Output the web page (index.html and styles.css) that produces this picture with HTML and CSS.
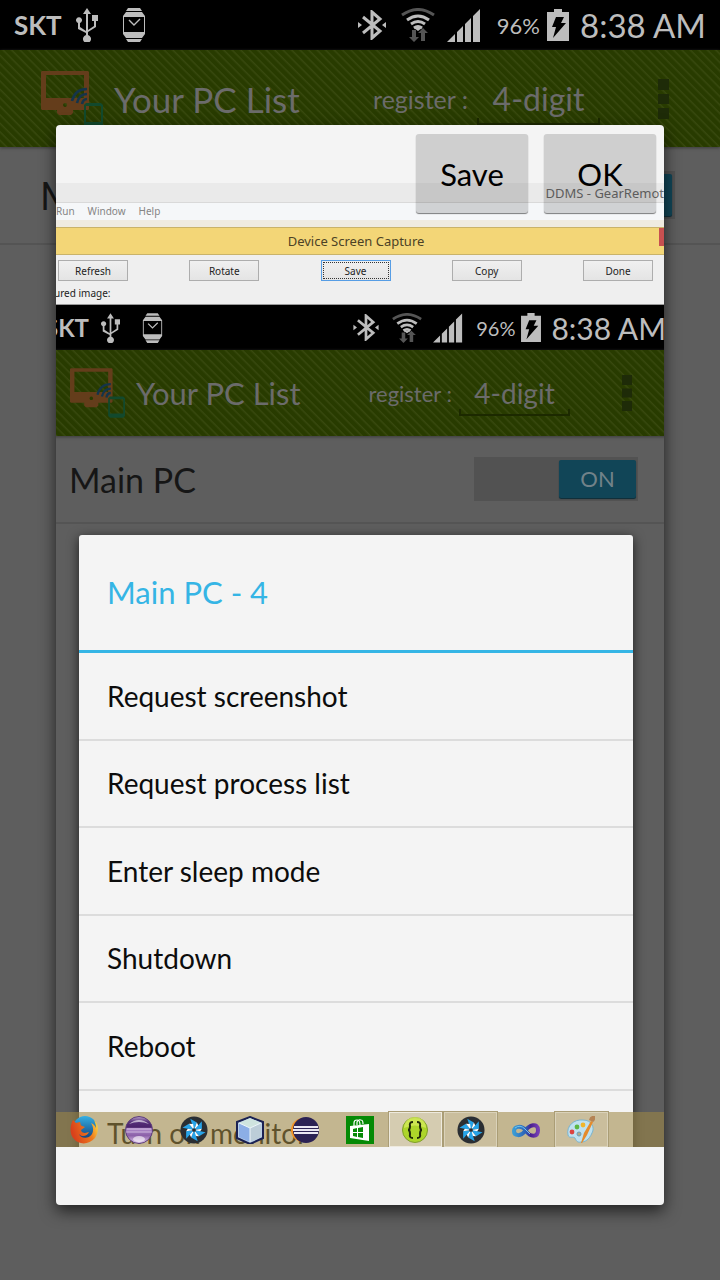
FILE: index.html
```html
<!DOCTYPE html>
<html lang="en">

<head>
    <meta charset="utf-8">
    <meta name="viewport" content="width=device-width, initial-scale=1.0">
    <title>Your PC List</title>
    <link rel="stylesheet" href="styles.css">
</head>

<body>
    <!-- Shared icons -->
    <svg class="sprite" aria-hidden="true">
        <symbol id="usb" viewBox="0 0 22 34">
            <path d="M11 0l4 6h-3v16l6-4v-5h-2V7h6v6h-2v6l-8 5v3a4 4 0 1 1-2 0v-2l-8-4v-6a3 3 0 1 1 2 0v4l6 4V6H7z" />
        </symbol>
        <symbol id="watch" viewBox="0 0 24 34">
            <path d="M6 0h12l2 3H4zM4 31h16l-2 3H6z" />
            <path fill-rule="evenodd" d="M4 4h16l3 4v18l-3 4H4l-3-4V8zM2 9v15h20V9z" />
            <path d="M7 12l5 5 6-6" fill="none" stroke="currentColor" stroke-width="1.4" />
        </symbol>
        <symbol id="bluetooth" viewBox="0 0 28 30">
            <path d="M5 7l17 14-8 7V2l8 7L5 23" fill="none" stroke="currentColor" stroke-width="3" />
            <path d="M0 12l4 3-4 3zM28 12l-4 3 4 3z" />
        </symbol>
        <symbol id="wifi" viewBox="0 0 34 34">
            <g fill="none" stroke="currentColor" stroke-width="3">
                <path d="M1 7q16-11 32 0" stroke="#555" />
                <path d="M6 12q11-8 22 0M10 16q7-5 14 0M13 20q4-3 8 0" />
            </g>
            <path d="M13 20h8l-4 3z" />
            <path d="M11 22h4v7h3l-5 5-5-5h3zM20 33h4v-8h3l-5-5-5 5h3z" fill="#555" />
        </symbol>
        <symbol id="signal" viewBox="0 0 34 33">
            <path d="M0 33l8-8v8zM10 23l6-6v16h-6zM18 15l6-6v24h-6zM26 7l7-7v33h-7z" />
        </symbol>
        <symbol id="battery" viewBox="0 0 22 32">
            <path d="M7 0h8v3h7v29H0V3h7z" />
            <path d="M9 8h8l-3 6h5L6 29l3-11H5z" fill="#000" />
        </symbol>
        <symbol id="logo" viewBox="0 0 62 56">
            <path fill="#643d1b" fill-rule="evenodd" d="M1 0h46l1 1v37l-1 1H32v3l-2 2H18l-2-2v-3H1l-1-1V1zM5 4v23h38V4zM24 32a2 2 0 1 0 .1 0z" />
            <path d="M46 18q-12 0-15 12M46 23q-8 0-10 9M46 28q-4 0-5 5" fill="none" stroke="#14344b" stroke-width="2.6" />
            <path fill="#12492d" fill-rule="evenodd" d="M45 32h15l2 2v20l-2 2H45l-2-2V34zM45 35v16h15V35z" />
        </symbol>
        <symbol id="menu" viewBox="0 0 11 40">
            <path d="M0 0h11v11H0zM0 15h11v10H0zM0 29h11v11H0z" />
        </symbol>
        <symbol id="shutter" viewBox="0 0 30 30">
            <circle cx="15" cy="15" r="14.5" fill="#2a2e33" />
            <g id="blades">
                <path d="M15 15L11 3l7 4z" fill="#27a3e8" />
                <path d="M15 15l3-8 2 4z" fill="#fff" />
            </g>
            <use href="#blades" transform="rotate(60 15 15)" />
            <use href="#blades" transform="rotate(120 15 15)" />
            <use href="#blades" transform="rotate(180 15 15)" />
            <use href="#blades" transform="rotate(240 15 15)" />
            <use href="#blades" transform="rotate(300 15 15)" />
            <circle cx="15" cy="15" r="2" fill="#2a2e33" />
        </symbol>
    </svg>

    <div class="statusbar">
        <span class="carrier">SKT</span>
        <svg class="usb"><use href="#usb" /></svg>
        <svg class="watch"><use href="#watch" /></svg>
        <svg class="bluetooth"><use href="#bluetooth" /></svg>
        <svg class="wifi"><use href="#wifi" /></svg>
        <svg class="signal"><use href="#signal" /></svg>
        <span class="percent">96%</span>
        <svg class="battery"><use href="#battery" /></svg>
        <span class="clock">8:38 AM</span>
    </div>
    <header class="actionbar">
        <svg class="logo"><use href="#logo" /></svg>
        <h1>Your PC List</h1>
        <label for="code">register :</label>
        <input class="code" id="code" type="text" placeholder="4-digit">
        <button class="menu" aria-label="Menu"><svg><use href="#menu" /></svg></button>
    </header>
    <div class="pc">
        <h2>Main PC</h2>
        <label class="toggle"><input type="checkbox" checked><span>ON</span></label>
    </div>

    <section class="dialog">
        <div class="actions">
            <button>Save</button>
            <button>OK</button>
        </div>

        <div class="desktop">
            <div class="titlebar">DDMS - GearRemot</div>
            <nav class="menubar">
                <a href="#">Run</a>
                <a href="#">Window</a>
                <a href="#">Help</a>
            </nav>
            <div class="capture-title">Device Screen Capture</div>
            <div class="capture-tools">
                <button>Refresh</button>
                <button>Rotate</button>
                <button class="focus">Save</button>
                <button>Copy</button>
                <button>Done</button>
            </div>
            <p class="capture-label">ured image:</p>

            <div class="phone">
                <div class="statusbar">
                    <span class="carrier">SKT</span>
                    <svg class="usb"><use href="#usb" /></svg>
                    <svg class="watch"><use href="#watch" /></svg>
                    <svg class="bluetooth"><use href="#bluetooth" /></svg>
                    <svg class="wifi"><use href="#wifi" /></svg>
                    <svg class="signal"><use href="#signal" /></svg>
                    <span class="percent">96%</span>
                    <svg class="battery"><use href="#battery" /></svg>
                    <span class="clock">8:38 AM</span>
                </div>
                <div class="actionbar">
                    <svg class="logo"><use href="#logo" /></svg>
                    <h1>Your PC List</h1>
                    <label for="code2">register :</label>
                    <input class="code" id="code2" type="text" placeholder="4-digit">
                    <button class="menu" aria-label="Menu"><svg><use href="#menu" /></svg></button>
                </div>
                <div class="pc">
                    <h2>Main PC</h2>
                    <label class="toggle"><input type="checkbox" checked><span>ON</span></label>
                </div>
                <div class="options">
                    <h3>Main PC - 4</h3>
                    <ul>
                        <li><button>Request screenshot</button></li>
                        <li><button>Request process list</button></li>
                        <li><button>Enter sleep mode</button></li>
                        <li><button>Shutdown</button></li>
                        <li><button>Reboot</button></li>
                        <li><button>Turn off monitor</button></li>
                    </ul>
                </div>
            </div>

            <div class="taskbar">
                <button aria-label="Firefox">
                    <svg viewBox="0 0 28 28">
                        <defs>
                            <linearGradient id="fire" x1="0" y1="0.3" x2="1" y2="0">
                                <stop offset="0" stop-color="#d8401c" />
                                <stop offset="0.6" stop-color="#ee7a1c" />
                                <stop offset="1" stop-color="#ffe44a" />
                            </linearGradient>
                            <linearGradient id="globe" x1="0" y1="0" x2="0" y2="1">
                                <stop offset="0" stop-color="#35b0e4" />
                                <stop offset="1" stop-color="#123a78" />
                            </linearGradient>
                        </defs>
                        <circle cx="15" cy="12" r="12" fill="url(#globe)" />
                        <path d="M3 4l3 3 4-1c1 2 0 3 2 4l3 1-4 3c0 2 2 3 4 3l4-1c-2 5-8 5-10 2 1 4 9 6 13 0 2-4 1-8-1-11 3 1 4 3 5 5 0-3-1-6-2-8 5 4 5 12 1 18-6 7-16 7-21 1C-1 18 0 9 3 4z" fill="url(#fire)" />
                    </svg>
                </button>
                <button aria-label="Eclipse">
                    <svg viewBox="0 0 28 28">
                        <defs>
                            <linearGradient id="orb" x1="0" y1="0" x2="0" y2="1">
                                <stop offset="0" stop-color="#b9a2cc" />
                                <stop offset="0.2" stop-color="#56307a" />
                                <stop offset="0.4" stop-color="#4a236b" />
                                <stop offset="0.45" stop-color="#b08ccb" />
                                <stop offset="0.7" stop-color="#8b60a8" />
                                <stop offset="1" stop-color="#e2cbee" />
                            </linearGradient>
                        </defs>
                        <circle cx="14" cy="14" r="13.5" fill="url(#orb)" stroke="#5c3c78" />
                        <path d="M2 13h24M1 16h26" stroke="#dccbe8" stroke-width="1" opacity=".8" />
                        <path d="M4 8q10-8 20 0-10-4-20 0z" fill="#fff" opacity=".6" />
                        <ellipse cx="14" cy="23" rx="6" ry="3" fill="#fff" opacity=".6" />
                    </svg>
                </button>
                <button aria-label="Gear IDE"><svg viewBox="0 0 30 30"><use href="#shutter" /></svg></button>
                <button aria-label="NetBeans">
                    <svg viewBox="0 0 28 28">
                        <path d="M14 1l13 5v16l-13 6-13-6V6z" fill="#b9cfe8" stroke="#1b2152" stroke-width="2" />
                        <path d="M14 2l11 5-11 5L3 7z" fill="#cfe4df" />
                        <path d="M3 7l11 5v14L3 21z" fill="#8caee6" />
                        <path d="M25 7l-11 5v14l11-5z" fill="#bccdd8" />
                        <path d="M3 7l11 5 11-5M14 12v14" fill="none" stroke="#edf6fa" />
                    </svg>
                </button>
                <button aria-label="Eclipse Luna">
                    <svg viewBox="0 0 28 28">
                        <circle cx="12" cy="14" r="12" fill="#f49325" />
                        <circle cx="15" cy="14" r="13" fill="#2b2254" />
                        <path d="M3 11h24M2 14h26M3 17h24" stroke="#e9e7f2" stroke-width="1.8" />
                    </svg>
                </button>
                <button aria-label="Store">
                    <svg viewBox="0 0 28 28">
                        <path d="M0 0h28v28H0z" fill="#058a05" />
                        <path d="M4 10l19-2v17L4 22z" fill="#fff" />
                        <path d="M8 10V7q0-3 3-3t3 5M11 9V6q1-3 4-2 2 0 2 4" fill="none" stroke="#fff" stroke-width="1.2" />
                        <path d="M7 13l4-1v4H7zM12 12l5-1v5h-5zM7 17h4v4l-4-1zM12 17h5v5l-5-1z" fill="#058a05" />
                    </svg>
                </button>
                <button class="open active" aria-label="Brackets">
                    <svg viewBox="0 0 28 28">
                        <circle cx="14" cy="14" r="12.5" fill="#add52a" stroke="#7f9e28" />
                        <path d="M3 12a11 11 0 0 1 22 0q-11-5-22 0z" fill="#d8ed62" opacity=".7" />
                        <path d="M12 6q-4 0-3 4 0 4-2 4 2 0 2 4-1 4 3 4M16 6q4 0 3 4 0 4 2 4-2 0-2 4 1 4-3 4" fill="none" stroke="#20290a" stroke-width="2" />
                    </svg>
                </button>
                <button class="open" aria-label="Gear IDE window"><svg viewBox="0 0 30 30"><use href="#shutter" /></svg></button>
                <button aria-label="Visual Studio">
                    <svg viewBox="0 0 28 28">
                        <defs>
                            <linearGradient id="loop">
                                <stop offset="0" stop-color="#3a9bd4" />
                                <stop offset="0.5" stop-color="#2c5db5" />
                                <stop offset="0.7" stop-color="#4b1f91" />
                                <stop offset="1" stop-color="#743eb2" />
                            </linearGradient>
                        </defs>
                        <path d="M14 15c-4-6-12-5-12 0s7 6 11 0 13-9 13-1-8 7-12 1z" fill="none" stroke="url(#loop)" stroke-width="4" />
                        <path d="M3 12q5-4 10 1l5 5" fill="none" stroke="#73c5ec" stroke-width="1" />
                    </svg>
                </button>
                <button class="open" aria-label="Paint">
                    <svg viewBox="0 0 28 28">
                        <path d="M1 19C-1 10 7 3 16 4c9 0 12 8 9 13-3 7-7 9-11 9-4 1-5-2-6-4-2-2-6 1-7-3z" fill="#bfe1ef" stroke="#79b4d0" />
                        <circle cx="5" cy="16" r="2.4" fill="#dc4340" />
                        <circle cx="10" cy="11" r="2.4" fill="#5bb744" />
                        <circle cx="16" cy="9" r="2.4" fill="#f1b52a" />
                        <circle cx="12" cy="18" r="2" fill="#b5ac85" stroke="#6a9db8" />
                        <path d="M14 27l3-10 7-12 2 1-6 13-5 8z" fill="#e58b2b" />
                        <path d="M22 4q1-5 6-4 1 4-2 6z" fill="#b58355" />
                    </svg>
                </button>
            </div>
        </div>
    </section>
</body>

</html>
```
FILE: styles.css
```css
* {
    box-sizing: border-box;
    margin: 0;
    padding: 0;
}

body {
    position: relative;
    min-height: 100vh;
    overflow: hidden;
    background-color: #5e5e5e;
    font-family: Lato, sans-serif;
}

button, input {
    font: inherit;
    color: inherit;
    border: none;
    background: none;
}

h1, h2, h3 {
    font-weight: 400;
}

ul {
    list-style: none;
}

svg {
    display: block;
    flex: none;
    fill: currentColor;
}

.sprite {
    position: absolute;
    width: 0;
    height: 0;
}

/* Status bar */
.statusbar {
    display: flex;
    align-items: center;
    height: 50px;
    padding: 0 14px;
    background-color: #000;
    color: #bdbdbd;
    white-space: nowrap;
}

.carrier {
    font-size: 26px;
    font-weight: 700;
}

.usb {
    width: 22px;
    height: 34px;
    margin-left: 14px;
}

.watch {
    width: 24px;
    height: 34px;
    margin-left: 24px;
}

.bluetooth {
    width: 28px;
    height: 30px;
    margin-left: auto;
}

.wifi {
    width: 34px;
    height: 34px;
    margin-left: 15px;
}

.signal {
    width: 34px;
    height: 33px;
    margin-left: 12px;
}

.percent {
    margin-left: 16px;
    font-size: 22px;
}

.battery {
    width: 22px;
    height: 32px;
    margin: 0 11px 0 7px;
}

.clock {
    font-size: 33px;
}

/* Green bar */
.actionbar {
    display: flex;
    align-items: center;
    height: 97px;
    padding: 0 51px 0 41px;
    background: repeating-linear-gradient(45deg, #283b00 0, #283b00 3px, #38490f 5px, #283b00 6px);
    color: #6b6b6b;
    box-shadow: 0 1px 3px #3c3c3c;
    white-space: nowrap;
}

.logo {
    width: 62px;
    height: 56px;
    margin-right: 11px;
}

.actionbar h1 {
    flex: 1;
    font-size: 35px;
}

.actionbar label {
    font-size: 25px;
}

.code {
    width: 123px;
    height: 52px;
    margin: 0 58px 0 9px;
    text-align: center;
    font-size: 32px;
    background:
        linear-gradient(#1c2900, #1c2900) bottom / 100% 2px no-repeat,
        linear-gradient(#1c2900, #1c2900) left bottom / 2px 7px no-repeat,
        linear-gradient(#1c2900, #1c2900) right bottom / 2px 7px no-repeat;
}

.code::placeholder {
    color: #6b6b6b;
}

.menu {
    color: #1e2b08;
}

.menu svg {
    width: 11px;
    height: 40px;
}

/* List of computers */
.pc {
    display: flex;
    align-items: center;
    justify-content: space-between;
    height: 98px;
    padding: 0 45px 0 40px;
    border-bottom: 2px solid #545454;
    color: #161616;
}

.pc h2 {
    font-size: 38px;
}

.toggle {
    position: relative;
    display: flex;
    justify-content: flex-end;
    width: 184px;
    padding: 3px;
    background-color: #525252;
}

.toggle input {
    position: absolute;
    inset: 0;
    opacity: 0;
}

.toggle span {
    width: 86px;
    border-radius: 2px;
    background-color: #114557;
    box-shadow: 0 1px 1px #0a2c38;
    color: #718289;
    font-size: 24px;
    line-height: 42px;
    text-align: center;
}

/* Screenshot dialog */
.dialog {
    position: absolute;
    inset: 125px 56px 75px;
    display: flex;
    flex-direction: column;
    padding: 58px 0;
    border-radius: 4px;
    background-color: #f4f4f4;
    box-shadow: 0 6px 16px rgba(0, 0, 0, .65);
}

.actions {
    position: absolute;
    z-index: 1;
    top: 9px;
    right: 8px;
    display: flex;
    gap: 16px;
}

.actions button {
    width: 112px;
    height: 79px;
    border-radius: 3px;
    background-color: rgba(0, 0, 0, .15);
    box-shadow: 0 1px 1px rgba(0, 0, 0, .5);
    font-size: 31px;
}

.desktop {
    position: relative;
    flex: 1;
    min-height: 0;
    display: flex;
    flex-direction: column;
    overflow: hidden;
    background-color: #efefef;
    font-family: "Noto Sans", sans-serif;
}

.titlebar {
    height: 20px;
    border-bottom: 1px solid #d9d9d9;
    background-color: #eaeaea;
    color: #6d6d6d;
    font-size: 13px;
    line-height: 20px;
    text-align: right;
}

.menubar {
    display: flex;
    gap: 13px;
    height: 24px;
    border-bottom: 7px solid #efebe0;
    background-color: #f5f7f9;
    line-height: 17px;
}

.menubar a {
    color: #858585;
    font-size: 10px;
    text-decoration: none;
}

.capture-title {
    height: 28px;
    padding-right: 8px;
    border: solid #c9b36a;
    border-width: 1px 0;
    background: linear-gradient(#c75050, #c75050) right top / 5px 18px no-repeat #f3d677;
    color: #4c4226;
    font-size: 13px;
    line-height: 27px;
    text-align: center;
}

.capture-tools {
    display: flex;
    justify-content: space-between;
    padding: 5px 11px 4px 2px;
}

.capture-tools button {
    width: 70px;
    height: 21px;
    border: 1px solid #adadad;
    background: linear-gradient(#f0f0f0, #e4e4e4);
    color: #222;
    font-size: 10px;
}

.capture-tools .focus {
    border: 1px solid #569de5;
    outline: 1px dotted #333;
    outline-offset: -3px;
}

.capture-label {
    height: 20px;
    margin-left: -2px;
    border-bottom: 1px solid #999;
    color: #222;
    font-size: 10px;
    line-height: 16px;
}

/* Phone inside the screenshot, wider than the dialog */
.phone {
    flex: 1;
    min-height: 0;
    margin: 0 -13px 0 -23px;
    background-color: #5e5e5e;
    font-family: Lato, sans-serif;
}

.phone .statusbar {
    height: 45px;
    padding: 0 11px 0 12px;
}

.phone .carrier {
    font-size: 24px;
}

.phone .usb {
    width: 19px;
    height: 30px;
    margin-left: 12px;
}

.phone .watch {
    width: 21px;
    height: 30px;
    margin-left: 22px;
}

.phone .bluetooth {
    width: 26px;
    height: 27px;
    margin-left: auto;
}

.phone .wifi {
    width: 30px;
    height: 30px;
    margin-left: 13px;
}

.phone .signal {
    width: 30px;
    height: 30px;
    margin-left: 11px;
}

.phone .percent {
    margin-left: 13px;
    font-size: 20px;
}

.phone .battery {
    width: 20px;
    height: 29px;
    margin: 0 10px 0 6px;
}

.phone .clock {
    font-size: 30px;
}

.phone .actionbar {
    height: 86px;
    padding: 0 45px 0 37px;
}

.phone .logo {
    width: 55px;
    height: 52px;
    margin-right: 11px;
}

.phone .actionbar h1 {
    font-size: 31px;
}

.phone .actionbar label {
    font-size: 22px;
}

.phone .code {
    width: 111px;
    height: 46px;
    margin: 0 52px 0 7px;
    font-size: 28px;
}

.phone .menu svg {
    width: 10px;
    height: 36px;
}

.phone .pc {
    height: 88px;
    padding: 0 39px 0 36px;
}

.phone .pc h2 {
    font-size: 34px;
}

.phone .toggle {
    width: 164px;
    padding: 3px 2px;
}

.phone .toggle span {
    width: 77px;
    font-size: 22px;
    line-height: 38px;
}

.options {
    margin: 11px 44px 0 46px;
    border-radius: 3px;
    background-color: #f4f4f4;
    box-shadow: 0 3px 12px rgba(0, 0, 0, .7);
}

.options h3 {
    padding: 0 28px;
    border-bottom: 3px solid #35b5e5;
    color: #35b5e5;
    font-size: 31px;
    line-height: 115px;
}

.options ul {
    display: grid;
    grid-auto-rows: 1fr;
    height: 525px;
}

.options li {
    border-bottom: 2px solid #dcdcdc;
}

.options button {
    width: 100%;
    height: 100%;
    padding: 0 28px;
    color: #0c0c0c;
    font-size: 28px;
    text-align: left;
}

/* Windows taskbar */
.taskbar {
    position: absolute;
    inset: auto 0 0;
    display: grid;
    grid-template-columns: repeat(10, 1fr);
    height: 35px;
    padding-right: 55px;
    background-color: rgba(159, 136, 69, .57);
}

.taskbar button {
    display: flex;
    align-items: center;
    justify-content: center;
    margin: 0 1px;
}

.taskbar svg {
    width: 28px;
    height: 28px;
}

.taskbar .open {
    border: 1px solid #dad2ba;
    outline: 1px solid #aa9d76;
    background-color: rgba(255, 255, 255, .12);
}

.taskbar .active {
    border-color: #eeeade;
    background-color: rgba(255, 255, 255, .3);
}
```
